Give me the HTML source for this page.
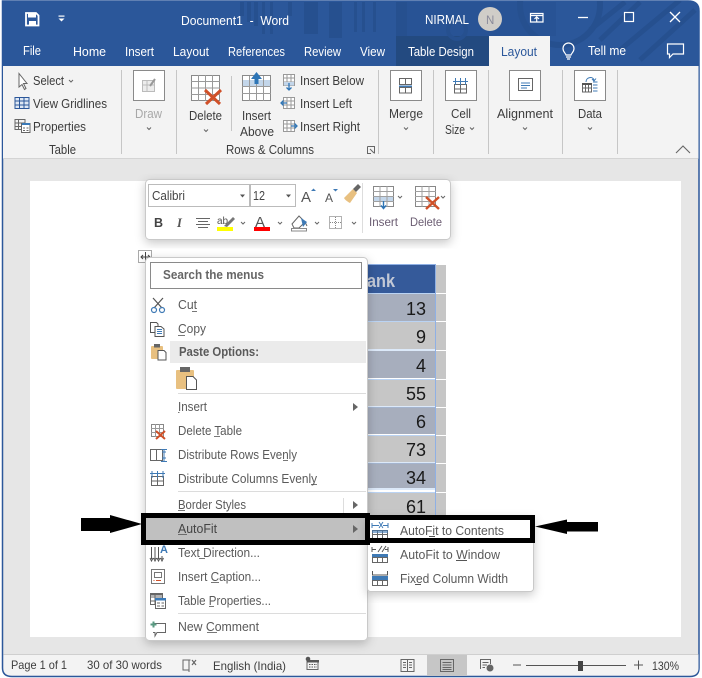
<!DOCTYPE html>
<html><head><meta charset="utf-8"><style>
html,body{margin:0;padding:0;background:#fff;width:702px;height:678px;overflow:hidden}
svg{display:block}
text{font-family:"Liberation Sans",sans-serif;font-size:12.7px;fill:#444}
.w text{fill:#fff}
.r text{fill:#3c3c3c}
.m text{fill:#5a5a5a}
.n text{font-size:18px;fill:#1a1a1a;text-anchor:end}
</style></head><body>
<svg width="702" height="678" viewBox="0 0 702 678" xmlns="http://www.w3.org/2000/svg">
<defs>
<filter id="sh" x="-10%" y="-10%" width="120%" height="125%"><feDropShadow dx="0" dy="3" stdDeviation="5" flood-color="#000" flood-opacity=".22"/></filter>
<clipPath id="tb"><path d="M2 66V1H688Q698 1 698 11V66Z"/></clipPath>
</defs>
<rect width="702" height="678" fill="#fff"/>
<!-- window -->
<path d="M2.5 1H688Q699 1 699 11V668Q699 676.500 690 676.500H12Q2.500 676.500 2.500 668Z" fill="#e6e6e6" stroke="#2b579a" stroke-width="1.500"/>
<path d="M2 66V1H688Q699 1 699 11V66Z" fill="#2b579a"/>
<g clip-path="url(#tb)">
<rect x="396" y="2" width="11" height="34" fill="#26508f"/>
<rect x="407" y="2" width="149" height="34" fill="#285395"/>
<rect x="396" y="36" width="93" height="30" fill="#234a80"/>
<g fill="#26508f"><rect x="240" y="2" width="4" height="14"/><rect x="247" y="2" width="4" height="20"/><rect x="254" y="2" width="4" height="24"/><rect x="262" y="2" width="3" height="32"/><rect x="270" y="2" width="3" height="32"/><rect x="288" y="2" width="4" height="14"/><rect x="304" y="2" width="14" height="32"/><rect x="329" y="2" width="13" height="36"/><rect x="354" y="2" width="3" height="30"/><rect x="362" y="2" width="3" height="30"/><rect x="373" y="2" width="3" height="30"/></g>
<g fill="none" stroke="#26508f"><circle cx="457" cy="30" r="9" stroke-width="4"/><circle cx="560" cy="5" r="40" stroke-width="6"/><path d="M620 50L680 0M640 60L695 10M590 30L625 2M600 40L640 2" stroke-width="5"/></g>
</g>
<!-- title bar -->
<path d="M26 13H36L38.500 15.500V25.500H26Z" fill="none" stroke="#fff" stroke-width="1.800"/>
<rect x="28" y="13" width="8" height="4.500" fill="#fff"/><rect x="29" y="21" width="7" height="5" fill="#fff"/>
<rect x="58.500" y="15.500" width="6" height="1.200" fill="#fff"/><path d="M58.500 18.500H64.500L61.500 21.500Z" fill="#fff"/>
<g class="w">
<text x="181" y="25" textLength="108" lengthAdjust="spacingAndGlyphs" xml:space="preserve">Document1  -  Word</text>
<text x="425" y="24" textLength="44" lengthAdjust="spacingAndGlyphs">NIRMAL</text>
<text x="23" y="55" textLength="18" lengthAdjust="spacingAndGlyphs">File</text>
<text x="73" y="56" textLength="33" lengthAdjust="spacingAndGlyphs">Home</text>
<text x="125" y="56" textLength="29" lengthAdjust="spacingAndGlyphs">Insert</text>
<text x="173" y="56" textLength="36" lengthAdjust="spacingAndGlyphs">Layout</text>
<text x="228" y="56" textLength="57" lengthAdjust="spacingAndGlyphs">References</text>
<text x="304" y="56" textLength="37" lengthAdjust="spacingAndGlyphs">Review</text>
<text x="360" y="56" textLength="25" lengthAdjust="spacingAndGlyphs">View</text>
<text x="408" y="56" textLength="66" lengthAdjust="spacingAndGlyphs">Table Design</text>
<text x="588" y="55" textLength="38" lengthAdjust="spacingAndGlyphs">Tell me</text>
</g>
<circle cx="490" cy="19" r="12" fill="#d0cdc8"/>
<text x="486" y="24" style="font-size:11.500px;fill:#8a8a9a">N</text>
<rect x="489" y="36" width="61" height="30" fill="#f3f3f3"/>
<text x="501" y="56" textLength="36" lengthAdjust="spacingAndGlyphs" style="fill:#2b579a">Layout</text>
<!-- title icons -->
<g fill="none" stroke="#fff" stroke-width="1.200">
<path d="M530.500 13.500H543V22H530.500ZM530.500 15.500H543M536.700 21.500V17M534.500 19L536.700 16.800L539 19"/>
<path d="M578 17.500H588" stroke-width="1.300"/>
<rect x="624.500" y="12.500" width="9" height="9"/>
<path d="M670 12L680 22M680 12L670 22" stroke-width="1.300"/>
<path d="M566 55C565.500 53 563 52 563 48.500A5.500 5.500 0 0 1 574 48.500C574 52 571.500 53 571 55ZM566 57H571M567 59H570"/>
<path d="M667.500 44H683.500V54H673L669.500 57.500V54H667.500Z"/>
</g>
<!-- ribbon -->
<rect x="3" y="66" width="695.500" height="92" fill="#f3f3f3"/>
<rect x="3" y="158" width="695.500" height="1" fill="#d4d4d4"/>
<g fill="#c6c6c6"><rect x="121" y="70" width="1" height="84"/><rect x="176" y="70" width="1" height="84"/><rect x="231" y="76" width="1" height="55"/><rect x="378" y="70" width="1" height="84"/><rect x="433" y="70" width="1" height="84"/><rect x="488" y="70" width="1" height="84"/><rect x="562" y="70" width="1" height="84"/><rect x="617" y="70" width="1" height="84"/></g>
<g class="r">
<text x="33" y="85" textLength="31" lengthAdjust="spacingAndGlyphs">Select</text>
<text x="33" y="108" textLength="74" lengthAdjust="spacingAndGlyphs">View Gridlines</text>
<text x="33" y="131" textLength="53" lengthAdjust="spacingAndGlyphs">Properties</text>
<text x="49" y="154" textLength="27" lengthAdjust="spacingAndGlyphs">Table</text>
<text x="135" y="118" textLength="27" lengthAdjust="spacingAndGlyphs" style="fill:#a8a8a8">Draw</text>
<text x="189" y="120" textLength="33" lengthAdjust="spacingAndGlyphs">Delete</text>
<text x="242" y="120" textLength="29" lengthAdjust="spacingAndGlyphs">Insert</text>
<text x="240" y="136" textLength="34" lengthAdjust="spacingAndGlyphs">Above</text>
<text x="300" y="85" textLength="64" lengthAdjust="spacingAndGlyphs">Insert Below</text>
<text x="300" y="108" textLength="52" lengthAdjust="spacingAndGlyphs">Insert Left</text>
<text x="300" y="131" textLength="60" lengthAdjust="spacingAndGlyphs">Insert Right</text>
<text x="226" y="154" textLength="88" lengthAdjust="spacingAndGlyphs">Rows &amp; Columns</text>
<text x="389" y="118" textLength="34" lengthAdjust="spacingAndGlyphs">Merge</text>
<text x="451" y="118" textLength="20" lengthAdjust="spacingAndGlyphs">Cell</text>
<text x="445" y="134" textLength="20" lengthAdjust="spacingAndGlyphs">Size</text>
<text x="497" y="118" textLength="56" lengthAdjust="spacingAndGlyphs">Alignment</text>
<text x="578" y="118" textLength="24" lengthAdjust="spacingAndGlyphs">Data</text>
</g>
<!-- ribbon chevrons -->
<g fill="none" stroke="#666" stroke-width="1">
<path d="M69 80L71 82L73 80M147 127.500L149 129.500L151 127.500M204 129.500L206 131.500L208 129.500M404 127.500L406 129.500L408 127.500M470 127.500L472 129.500L474 127.500M523 127.500L525 129.500L527 127.500M588 127.500L590 129.500L592 127.500"/>
<path d="M676 153L683 146L690 153" stroke-width="1.100"/>
<path d="M367.500 146.500H374.500V153.500M367.500 146.500V153.500H371M370 149L374 153"/>
</g>
<!-- small ribbon icons -->
<path d="M19 73.500V87L22 84.500L24.500 89.500L26 88.500L23.500 83.500H27Z" fill="#fff" stroke="#666"/>
<g fill="none" stroke="#2b579a"><rect x="15" y="97.500" width="14" height="11" fill="#dfe8f4"/><path d="M15 101H29M15 105H29M19.500 97V108M24 97V108"/></g>
<g fill="none" stroke="#666"><rect x="15" y="119.500" width="10" height="10"/><path d="M15 123H25M15 126.500H25M18.500 120V130"/><rect x="21.500" y="123.500" width="8.500" height="9" fill="#fff"/><path d="M23 128H25M26.500 128H28.500M23 130.500H25M26.500 130.500H28.500"/></g>
<rect x="22" y="123" width="8" height="2" fill="#3a7ab8"/>
<!-- boxed buttons -->
<g fill="#fff" stroke="#8a8a8a"><rect x="133.500" y="70.500" width="31" height="30"/><rect x="390.500" y="70.500" width="31" height="30"/><rect x="445.500" y="70.500" width="31" height="30"/><rect x="509.500" y="70.500" width="31" height="30"/><rect x="574.500" y="70.500" width="31" height="30"/></g>
<g fill="none" stroke="#bbb"><rect x="142.500" y="80.500" width="12" height="11" fill="#ececec"/><path d="M147 80V91M142 85H154"/><path d="M150 86L155 79" stroke="#999" stroke-width="2"/></g>
<g fill="none" stroke="#666"><rect x="399.500" y="78.500" width="12" height="6"/><rect x="399.500" y="87.500" width="12" height="5.500"/><path d="M405.500 78V84M405.500 88V93"/></g>
<rect x="399" y="85.500" width="13" height="1.500" fill="#3f7ab5"/>
<g fill="none" stroke="#666"><rect x="454.500" y="84.500" width="12" height="8.500"/><path d="M460.500 84V93M454 89H467"/></g>
<path d="M453 81.500H468M455.500 78V85M460.500 78V85M465.500 78V85" stroke="#3f7ab5" fill="none"/>
<rect x="518.500" y="78.500" width="14" height="12" fill="#fff" stroke="#666"/><path d="M521 83H530M521 85.500H530M521 88H527" stroke="#3f7ab5" fill="none"/>
<g fill="none" stroke="#666"><rect x="582.500" y="84.500" width="9" height="7.500"/><path d="M582 88H592M585.500 85V92M588.500 85V92"/><path d="M593 82H597.500M593 85H597.500M593 88H597.500M593 91H597.500" stroke="#3f7ab5"/><path d="M586 82C586 77 593 76 594 80M592 79L594 81L596 78.500" stroke="#3f7ab5"/></g>
<rect x="582" y="83" width="10" height="2" fill="#555"/>
<!-- delete icon -->
<g fill="#fff" stroke="#8a8a8a"><rect x="191.500" y="75.500" width="28" height="25"/></g>
<path d="M191 81.500H220M191 88H220M191 94.500H220M198.500 75V101M205.500 75V101M212.500 75V101" stroke="#9a9a9a" fill="none"/>
<path d="M205 90L220 104M221 90L206 104" stroke="#d05028" stroke-width="3" fill="none"/>
<!-- insert above -->
<rect x="242.500" y="75.500" width="28" height="25" fill="#fff" stroke="#8a8a8a"/>
<rect x="243" y="80" width="27" height="6" fill="#c3d6ea"/>
<path d="M242 86.500H271M242 93.500H271M249.500 76V101M256.500 76V101M263.500 76V101" stroke="#9a9a9a" fill="none"/>
<path d="M256.500 72L251 79H254.500V84H258.500V79H262Z" fill="#2e75b6"/>
<!-- insert below/left/right -->
<g fill="none" stroke="#9a9a9a">
<rect x="283.500" y="74.500" width="11" height="11" fill="#fff"/><path d="M283 78H295M283 82H295M287 74V86M291 74V86"/>
<rect x="283.500" y="97.500" width="11" height="11" fill="#fff"/><path d="M283 101H295M283 105H295M287 97V109M291 97V109"/>
<rect x="283.500" y="120.500" width="11" height="11" fill="#fff"/><path d="M283 124H295M283 128H295M287 120V132M291 120V132"/>
</g>
<rect x="284" y="82" width="10" height="3.500" fill="#c3d6ea"/><path d="M289 83V90M286.500 87.500L289 90L291.500 87.500" stroke="#2e75b6" stroke-width="1.300" fill="none"/>
<path d="M287 103H281M283.500 100.500L281 103L283.500 105.500" stroke="#2e75b6" stroke-width="1.300" fill="none"/>
<path d="M291 126H297M294.500 123.500L297 126L294.500 128.500" stroke="#2e75b6" stroke-width="1.300" fill="none"/>
<!-- document page -->
<rect x="30" y="181" width="651" height="456" fill="#fff"/>
<!-- status bar -->
<rect x="3.500" y="654" width="695" height="1" fill="#cfcfcf"/>
<path d="M3.500 655H698.500V668Q698.500 675.500 690 675.500H12Q3.500 675.500 3.500 668Z" fill="#f3f3f3"/>
<rect x="427" y="655" width="40" height="21" fill="#c6c6c6"/>
<g class="r">
<text x="11" y="669" textLength="56" lengthAdjust="spacingAndGlyphs" style="font-size:12px">Page 1 of 1</text>
<text x="87" y="669" textLength="75" lengthAdjust="spacingAndGlyphs" style="font-size:12px">30 of 30 words</text>
<text x="213" y="670" textLength="73" lengthAdjust="spacingAndGlyphs" style="font-size:12px">English (India)</text>
<text x="652" y="670" textLength="27" lengthAdjust="spacingAndGlyphs" style="font-size:12px">130%</text>
</g>
<g fill="none" stroke="#666">
<path d="M189 660H183V670H189M189 660V672M189 660H190.500"/>
<path d="M192 660L196 665M196 660L192 665" stroke-width="1.200"/>
<rect x="307" y="660.500" width="11" height="9"/>
<path d="M401 659.500H414V671.500H401ZM407.500 659.500V671.500M403 662.500H406M403 665H406M403 667.500H406M409 662.500H412M409 665H412M409 667.500H412"/>
<rect x="440.500" y="659.500" width="13" height="12"/><path d="M442.500 662.500H451.500M442.500 665H451.500M442.500 667.500H451.500M442.500 669.500H451.500"/>
<path d="M480.500 669V659.500H490.500V664M482.500 662.500H488.500M482.500 665H487M482.500 667.500H485"/>
</g>
<circle cx="490" cy="668" r="3.500" fill="#666"/>
<circle cx="308" cy="659" r="2.300" fill="#555"/>
<rect x="307" y="660" width="12" height="2.500" fill="#555"/>
<path d="M309 664.500H317M309 667H317" stroke="#555" stroke-dasharray="1.500 1" fill="none"/>
<path d="M513 665H521M526 665.500H626M634 665H643M638.500 660.500V669.500M578.500 662V669" stroke="#555" fill="none"/>
<rect x="578" y="661" width="5" height="10" fill="#444"/>
<!-- table -->
<rect x="367" y="265" width="69" height="250" fill="#fff"/>
<g fill="#c6c6c6"><rect x="436" y="265" width="10" height="28"/><rect x="436" y="294" width="10" height="27"/><rect x="436" y="322" width="10" height="28"/><rect x="436" y="351" width="10" height="28"/><rect x="436" y="380" width="10" height="27"/><rect x="436" y="408" width="10" height="27"/><rect x="436" y="436" width="10" height="27"/><rect x="436" y="464" width="10" height="28"/><rect x="436" y="493" width="10" height="22"/></g>
<rect x="367" y="265" width="68" height="28" fill="#355a9a"/>
<rect x="367" y="294" width="68" height="27" fill="#a7aebd"/>
<rect x="367" y="322" width="68" height="27" fill="#c6c6c6"/>
<rect x="367" y="351" width="68" height="27" fill="#a7aebd"/>
<rect x="367" y="380" width="68" height="26" fill="#c6c6c6"/>
<rect x="367" y="407" width="68" height="27" fill="#a7aebd"/>
<rect x="367" y="436" width="68" height="26" fill="#c6c6c6"/>
<rect x="367" y="463" width="68" height="25" fill="#a7aebd"/>
<rect x="367" y="493" width="68" height="22" fill="#c6c6c6"/>
<path d="M367 264.500H435.500V515" stroke="#8fb0e4" fill="none"/>
<path d="M367 293.500H435M367 321.500H435M367 350H435M367 379.500H435M367 407H435M367 435.500H435M367 463H435M367 489H435M367 492.500H435" stroke="#9cc0ee" fill="none" opacity=".7"/>
<text x="367" y="287" textLength="28" lengthAdjust="spacingAndGlyphs" style="font-size:18px;font-weight:bold;fill:#c3c9d6">ank</text>
<g class="n">
<text x="426" y="315">13</text><text x="426" y="343">9</text><text x="426" y="372">4</text><text x="426" y="400">55</text><text x="426" y="428">6</text><text x="426" y="456">73</text><text x="426" y="484">34</text><text x="426" y="513">61</text>
</g>
<!-- mini toolbar -->
<rect x="145.500" y="179.500" width="305" height="60" rx="4" fill="#fff" stroke="#c9c9c9" filter="url(#sh)"/>
<rect x="148.500" y="184.500" width="101" height="22" fill="#fff" stroke="#bbb"/>
<rect x="250.500" y="184.500" width="45" height="22" fill="#fff" stroke="#bbb"/>
<text x="152" y="200" textLength="33" lengthAdjust="spacingAndGlyphs">Calibri</text>
<text x="253" y="200" textLength="12" lengthAdjust="spacingAndGlyphs">12</text>
<path d="M240 194.500H245L242.500 197.500ZM286 194.500H291L288.500 197.500Z" fill="#555"/>
<text x="301" y="202" style="font-size:15px;fill:#555">A</text>
<text x="325" y="202" style="font-size:12px;fill:#555">A</text>
<path d="M311 191L313.500 188.500L316 191ZM333 189H338L335.500 191.500Z" fill="#3f7ab5"/>
<path d="M344 198L353 189L357 193L350 203C348 202 345 200 344 198Z" fill="#e8c080"/>
<path d="M353 189L358 184L361 187L356 192Z" fill="#666"/>
<text x="154" y="227" style="font-size:12.500px;font-weight:bold;fill:#444">B</text>
<text x="177" y="227" style="font-size:12.500px;font-style:italic;font-family:'Liberation Serif',serif;font-weight:bold;fill:#555">I</text>
<path d="M196 218.500H210M198 221.500H208M196 224.500H210M198 227.500H208" stroke="#666" fill="none"/>
<text x="217" y="224" style="font-size:10px;fill:#555">ab</text>
<path d="M224 226L233 217L235 219L227 227Z" fill="#777"/>
<rect x="217" y="227" width="16" height="4" fill="#ffff00"/>
<text x="255" y="227" style="font-size:15px;fill:#555">A</text>
<rect x="254" y="227" width="16" height="4" fill="#ff0000"/>
<path d="M292 224L299 216L305 222L299 228H294ZM305 222L307 226" fill="#fff" stroke="#666"/>
<path d="M301 218L307 222L303 227Z" fill="#3f7ab5"/>
<rect x="291.500" y="228.500" width="15" height="2.500" fill="#fff" stroke="#888"/>
<rect x="329.500" y="216.500" width="12" height="12" fill="none" stroke="#666" stroke-dasharray="1 1"/>
<path d="M335.500 217V229M330 222.500H342" stroke="#888" stroke-dasharray="1 1" fill="none"/>
<g fill="none" stroke="#666"><path d="M241 222L243 224L245 222M278 222L280 224L282 222M315 222L317 224L319 222M352 222L354 224L356 222M398 196L400 198L402 196M441 196L443 198L445 196"/></g>
<rect x="362" y="183" width="1" height="50" fill="#ddd"/>
<rect x="373.500" y="186.500" width="20" height="20" fill="#fff" stroke="#888"/>
<rect x="374" y="196" width="19" height="5" fill="#c3d6ea"/>
<path d="M373 191.500H394M373 196.500H394M373 201.500H394M380 186V207M387 186V207" stroke="#a0a0a0" fill="none"/>
<path d="M383.500 201V208M381 205.500L383.500 208.500L386 205.500" stroke="#2e75b6" stroke-width="1.400" fill="none"/>
<rect x="415.500" y="186.500" width="20" height="20" fill="#fff" stroke="#888"/>
<path d="M415 191.500H436M415 196.500H436M415 201.500H436M422 186V207M429 186V207" stroke="#a0a0a0" fill="none"/>
<path d="M426 197L439 209M439 197L426 209" stroke="#d05028" stroke-width="2.400" fill="none"/>
<text x="369" y="226" textLength="29" lengthAdjust="spacingAndGlyphs" style="font-size:12px;fill:#6b5d72">Insert</text>
<text x="410" y="226" textLength="32" lengthAdjust="spacingAndGlyphs" style="font-size:12px;fill:#6b5d72">Delete</text>
<!-- table anchor -->
<rect x="138.500" y="250.500" width="13" height="12" fill="#fff" stroke="#aaa"/>
<path d="M141 257H150M145.500 252V262M143 255L141 257L143 259M148 255L150 257L148 259" stroke="#444" fill="none"/>
<!-- context menu -->
<rect x="145.500" y="257.500" width="222" height="383" rx="4" fill="#fff" stroke="#c9c9c9" filter="url(#sh)"/>
<rect x="150.500" y="262.500" width="211" height="26" fill="#fff" stroke="#8a8a8a"/>
<text x="163" y="279" textLength="101" lengthAdjust="spacingAndGlyphs" style="font-weight:bold;fill:#666">Search the menus</text>
<rect x="170" y="341" width="196" height="22" fill="#ebebeb"/>
<text x="179" y="356" textLength="80" lengthAdjust="spacingAndGlyphs" style="font-weight:bold;fill:#5a5a5a">Paste Options:</text>
<path d="M178 393.500H366M178 491.500H366M178 613.500H366" stroke="#dcdcdc" fill="none"/>
<path d="M343.500 498V514" stroke="#ddd" fill="none"/>
<rect x="146" y="518" width="220" height="23" fill="#c0c0c0"/>
<g class="m">
<text x="178" y="309" textLength="19" lengthAdjust="spacingAndGlyphs">Cut</text>
<text x="178" y="333" textLength="28" lengthAdjust="spacingAndGlyphs">Copy</text>
<text x="178" y="411" textLength="29" lengthAdjust="spacingAndGlyphs">Insert</text>
<text x="178" y="435" textLength="64" lengthAdjust="spacingAndGlyphs">Delete Table</text>
<text x="178" y="459" textLength="119" lengthAdjust="spacingAndGlyphs">Distribute Rows Evenly</text>
<text x="178" y="483" textLength="139" lengthAdjust="spacingAndGlyphs">Distribute Columns Evenly</text>
<text x="178" y="509" textLength="68" lengthAdjust="spacingAndGlyphs">Border Styles</text>
<text x="178" y="533" textLength="39" lengthAdjust="spacingAndGlyphs" style="fill:#444">AutoFit</text>
<text x="178" y="557" textLength="82" lengthAdjust="spacingAndGlyphs">Text Direction...</text>
<text x="178" y="581" textLength="83" lengthAdjust="spacingAndGlyphs">Insert Caption...</text>
<text x="178" y="605" textLength="93" lengthAdjust="spacingAndGlyphs">Table Properties...</text>
<text x="178" y="631" textLength="81" lengthAdjust="spacingAndGlyphs">New Comment</text>
</g>
<path d="M192 311.500H197M178 335.500H185M178 412.500H179.500M214 436.500H220M283 460.500H288M311 484.500H317M178 510.500H185M178 534.500H187M199 558.500H205M211 582.500H219M209 606.500H214M207 632.500H217" stroke="#555" fill="none" opacity=".8"/>
<path d="M353 403L358 407L353 411ZM353 501L358 505L353 509ZM353 525L358 529L353 533Z" fill="#666"/>
<!-- menu icons -->
<g fill="none" stroke="#555" stroke-width="1.200"><path d="M153 298L162 308M163 298L154 308"/></g>
<g fill="none" stroke="#3f7ab5" stroke-width="1.200"><circle cx="154" cy="310" r="2.500"/><circle cx="162" cy="310" r="2.500"/></g>
<g fill="none" stroke="#555"><path d="M155 332.500H150.500V322.500H156.500L158 324V326"/><path d="M155 326.500H161L164 329V336.500H155Z" fill="#fff"/><path d="M157 329.500H162M157 331.500H162M157 333.500H162" stroke="#3f7ab5"/></g>
<!-- paste icons -->
<rect x="151" y="346" width="12" height="13" rx="1" fill="#e8c080"/><rect x="154" y="344" width="6" height="3.500" fill="#666"/>
<path d="M158 350.500H164L166 352.500V360H158Z" fill="#fff" stroke="#555"/>
<rect x="176" y="370" width="18" height="19" rx="1" fill="#e8c080"/><rect x="180" y="367" width="10" height="5" fill="#666"/>
<path d="M186.500 376.500H193L196.500 380V389.500H186.500Z" fill="#fff" stroke="#555"/>
<!-- delete table icon -->
<g fill="#fff" stroke="#888"><rect x="151.500" y="424.500" width="12" height="12"/></g><path d="M151 428.500H164M151 432.500H164M155.500 424V437M159.500 424V437" stroke="#999" fill="none"/>
<path d="M156 431L165 439M165 431L156 439" stroke="#d05028" stroke-width="2" fill="none"/>
<!-- distribute rows -->
<g fill="none" stroke="#666"><rect x="150.500" y="449.500" width="12" height="11"/><path d="M156.500 449V461"/></g>
<path d="M162 452H166M162 458H166M161 449.500H167M161 461.500H167M164 449V462" stroke="#3f7ab5" fill="none"/>
<!-- distribute cols -->
<g fill="none" stroke="#666"><rect x="151.500" y="476.500" width="12" height="9"/><path d="M157.500 476V486M151 481H164"/></g>
<path d="M150 473.500H165M152 471V478M157.500 471V478M163 471V478" stroke="#3f7ab5" fill="none"/>
<!-- text direction -->
<path d="M151.500 547V559M155 547V559M158.500 547V559M162 556V559" stroke="#555" fill="none"/>
<path d="M150 558L151.500 561L153 558M153.500 558L155 561L156.500 558M157 558L158.500 561L160 558M160.500 558L162 561L163.500 558" stroke="#555" fill="none"/>
<text x="160" y="553" style="font-size:11px;font-weight:bold;fill:#3f7ab5">A</text>
<!-- caption -->
<rect x="151.500" y="569.500" width="13" height="14" fill="#fff" stroke="#777"/><rect x="154.500" y="572.500" width="7" height="5" fill="#fff" stroke="#777"/><path d="M156 580.500H161M153.500 580.500H154.500" stroke="#d05028" fill="none"/>
<!-- properties -->
<g fill="none" stroke="#666"><rect x="150.500" y="593.500" width="12" height="11" fill="#fff"/><path d="M150 597H163M150 601H163M155 594V605"/><rect x="155.500" y="598.500" width="10" height="10" fill="#fff"/><path d="M157 603H160M161.500 603H164M157 606H160M161.500 606H164"/></g>
<rect x="150" y="593" width="13" height="2.500" fill="#666"/><rect x="155" y="598" width="11" height="2.500" fill="#3a7ab8"/>
<!-- new comment -->
<path d="M154.500 623.500H165.500V632.500H157L155 636V632.500H153" fill="none" stroke="#666"/>
<path d="M150.500 624.500H156.500M153.500 621.500V627.500" stroke="#5a9a82" stroke-width="2" fill="none"/>
<!-- submenu -->
<rect x="367.500" y="516.500" width="166" height="75" rx="3" fill="#fff" stroke="#c9c9c9" filter="url(#sh)"/>
<g class="m">
<text x="400" y="535" textLength="104" lengthAdjust="spacingAndGlyphs">AutoFit to Contents</text>
<text x="400" y="559" textLength="100" lengthAdjust="spacingAndGlyphs">AutoFit to Window</text>
<text x="400" y="583" textLength="108" lengthAdjust="spacingAndGlyphs">Fixed Column Width</text>
</g>
<path d="M429 536.500H435M456 560.500H467M415 584.500H421" stroke="#555" fill="none"/>
<g fill="none" stroke="#666"><path d="M372 525.500H379M383 525.500H388M372 523V528M388 523V528M379 522L383 528M383 522L379 528" stroke="#3f7ab5"/><rect x="372.500" y="530.500" width="15" height="9" fill="#fff"/><path d="M372 534.500H388M377.500 531V540M382.500 531V540"/></g>
<rect x="372" y="530" width="16" height="3" fill="#3f7ab5" opacity=".6"/>
<path d="M372 549.500H376M385 549.500H388M372 547V552M388 547V552M378 552L382 546M382 552L386 546" stroke="#555" fill="none"/>
<rect x="372" y="554" width="16" height="3.500" fill="#3f7ab5"/><rect x="372.500" y="557.500" width="15" height="5" fill="#fff" stroke="#666"/><path d="M377.500 558V563M382.500 558V563" stroke="#666"/>
<path d="M372.500 571V575H387.500V571" stroke="#555" fill="none"/>
<rect x="372" y="576" width="16" height="4" fill="#3f7ab5"/><rect x="372.500" y="580.500" width="15" height="5" fill="#fff" stroke="#666"/><path d="M377.500 581V586M382.500 581V586" stroke="#666"/>
<!-- black annotations -->
<path d="M143.500 515.500H367.500V542.500H143.500Z" fill="none" stroke="#000" stroke-width="5"/>
<path d="M367 517.500H532.500V540.500H367" fill="none" stroke="#000" stroke-width="5"/>
<path d="M81 518H110V515L142 524L110 533V531H81Z" fill="#000"/>
<path d="M535 526.500L567 519.500V522H598V531.500H567V534Z" fill="#000"/>
</svg>
</body></html>
